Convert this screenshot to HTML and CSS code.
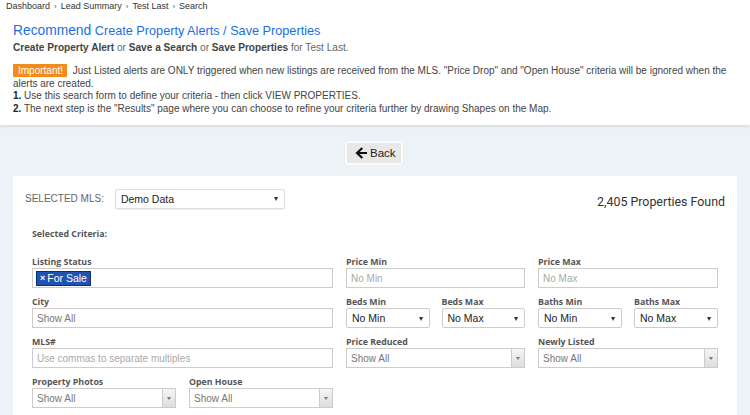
FILE: index.html
```html
<!DOCTYPE html>
<html>
<head>
<meta charset="utf-8">
<link rel="stylesheet" href="styles.css">
</head>
<body>
<header class="top">
  <nav class="crumbs">
    <span>Dashboard</span><span class="sep">›</span><span>Lead Summary</span><span class="sep">›</span><span>Test Last</span><span class="sep">›</span><span>Search</span>
  </nav>
  <h1 class="title"><span class="big">Recommend</span> Create Property Alerts / Save Properties</h1>
  <p class="sub"><b>Create Property Alert</b> or <b>Save a Search</b> or <b>Save Properties</b> for Test Last.</p>
  <div class="notes">
    <p><span class="badge">Important!</span> Just Listed alerts are ONLY triggered when new listings are received from the MLS. "Price Drop" and "Open House" criteria will be ignored when the alerts are created.</p>
    <p><b>1.</b> Use this search form to define your criteria - then click VIEW PROPERTIES.</p>
    <p><b>2.</b> The next step is the "Results" page where you can choose to refine your criteria further by drawing Shapes on the Map.</p>
  </div>
</header>
<main class="main">
  <div class="backrow">
    <button class="back"><svg class="arrow" viewBox="0 0 12 12" width="12" height="12"><path d="M11 6H2.5M6.5 1.8L2 6l4.5 4.2" fill="none" stroke="#111" stroke-width="2.2" stroke-linecap="square"/></svg>Back</button>
  </div>
  <section class="panel">
    <div class="mlsrow">
      <div class="mls-left">
        <span class="mls-label">SELECTED MLS:</span>
        <div class="sel sel-mls"><span>Demo Data</span><span class="caret">▾</span></div>
      </div>
      <div class="found">2,405 Properties Found</div>
    </div>
    <div class="criteria">
      <div class="crit-title">Selected Criteria:</div>
      <div class="grid">
        <div class="field">
          <label>Listing Status</label>
          <div class="input tags"><span class="tag"><span class="x">×</span> For Sale</span></div>
        </div>
        <div class="field">
          <label>Price Min</label>
          <div class="input ph-light">No Min</div>
        </div>
        <div class="field">
          <label>Price Max</label>
          <div class="input ph-light">No Max</div>
        </div>

        <div class="field">
          <label>City</label>
          <div class="input ph">Show All</div>
        </div>
        <div class="pair">
          <div class="field">
            <label>Beds Min</label>
            <div class="sel"><span>No Min</span><span class="caret">▾</span></div>
          </div>
          <div class="field">
            <label>Beds Max</label>
            <div class="sel"><span>No Max</span><span class="caret">▾</span></div>
          </div>
        </div>
        <div class="pair">
          <div class="field">
            <label>Baths Min</label>
            <div class="sel"><span>No Min</span><span class="caret">▾</span></div>
          </div>
          <div class="field">
            <label>Baths Max</label>
            <div class="sel"><span>No Max</span><span class="caret">▾</span></div>
          </div>
        </div>

        <div class="field">
          <label>MLS#</label>
          <div class="input ph-light">Use commas to separate multiples</div>
        </div>
        <div class="field">
          <label>Price Reduced</label>
          <div class="combo"><span>Show All</span><span class="btn"><i></i></span></div>
        </div>
        <div class="field">
          <label>Newly Listed</label>
          <div class="combo"><span>Show All</span><span class="btn"><i></i></span></div>
        </div>

        <div class="pair pair-wide">
          <div class="field">
            <label>Property Photos</label>
            <div class="combo"><span>Show All</span><span class="btn"><i></i></span></div>
          </div>
          <div class="field">
            <label>Open House</label>
            <div class="combo"><span>Show All</span><span class="btn"><i></i></span></div>
          </div>
        </div>
      </div>
    </div>
  </section>
</main>
</body>
</html>
```

FILE: styles.css
```css
* { box-sizing: border-box; }
html, body { margin: 0; padding: 0; }
body {
  font-family: "Liberation Sans", Arial, sans-serif;
  color: #333;
  background: #ecf3f6;
  width: 750px;
  height: 415px;
  overflow: hidden;
}
.top {
  background: #fff;
  padding: 0 13px;
  height: 125px;
  box-shadow: 0 1px 3px rgba(0,0,0,0.12);
  position: relative;
}
.crumbs {
  font-size: 9px;
  line-height: 13px;
  margin-left: -7px;
  color: #333;
  display: flex;
  gap: 4px;
}
.crumbs .sep { font-size: 8px; color: #555; }
.title {
  margin: 9px 0 0 0;
  font-weight: normal;
  font-size: 12.7px;
  line-height: 18px;
  color: #1a6fe6;
}
.title .big { font-size: 13.8px; }
.sub {
  margin: 1px 0 0 0;
  font-size: 10.1px;
  line-height: 13px;
  color: #666;
}
.sub b { color: #444; }
.notes {
  margin-top: 11px;
  font-size: 10px;
  line-height: 12.6px;
  color: #444;
}
.notes p { margin: 0; }
.notes b { color: #222; }
.badge {
  background: #f28a1c;
  color: #fff;
  padding: 1px 4px 1px 5px;
  margin-right: 3px;
}
.main { padding: 16px 13px 0 13px; }
.backrow { display: flex; justify-content: center; margin-left: -2px; }
.back {
  display: flex;
  align-items: center;
  gap: 3px;
  height: 24px;
  width: 58px;
  padding: 0 0 0 8px;
  font-family: "Liberation Sans", Arial, sans-serif;
  font-size: 11.5px;
  color: #222;
  background: #e8e8e8;
  border: 2px solid #fbfbfb;
  border-radius: 2px;
  box-shadow: 0 0 1px rgba(0,0,0,0.15);
}
.arrow { display: block; }
.panel {
  margin-top: 11px;
  background: #fff;
  height: 239px;
  padding: 12px 12px 0 12px;
}
.mlsrow {
  display: flex;
  justify-content: space-between;
  align-items: center;
}
.mls-left { display: flex; align-items: center; gap: 11px; }
.mls-label { font-size: 10px; color: #666; }
.found {
  font-family: Roboto, "Liberation Sans", sans-serif;
  font-size: 12.4px;
  color: #333;
  padding-top: 6px;
}
.sel {
  height: 20px;
  border: 1px solid #ccc;
  border-radius: 2px;
  display: flex;
  align-items: center;
  justify-content: space-between;
  padding: 0 6px 0 5px;
  font-size: 10.5px;
  color: #222;
  background: #fff;
}
.sel-mls { width: 170px; border-color: #ddd; box-shadow: 0 1px 1px rgba(0,0,0,0.06); }
.caret { font-size: 8px; color: #333; }
.criteria { padding: 19px 0 0 7px; width: 693px; }
.crit-title {
  font-family: "Open Sans", sans-serif;
  font-weight: 700;
  font-size: 8.8px;
  line-height: 12px;
  color: #555;
}
.grid {
  margin-top: 16px;
  display: grid;
  grid-template-columns: 301px 179px 180px;
  column-gap: 13px;
  row-gap: 8px;
}
.pair { display: grid; grid-template-columns: 1fr 1fr; column-gap: 12px; }
.pair-wide { column-gap: 13px; }
.field { display: flex; flex-direction: column; min-width: 0; }
.field label {
  font-family: "Open Sans", sans-serif;
  font-weight: 700;
  font-size: 8.8px;
  line-height: 12px;
  color: #555;
}
.input {
  height: 20px;
  border: 1px solid #ccc;
  display: flex;
  align-items: center;
  padding: 0 4px;
  font-size: 10px;
  white-space: nowrap;
  overflow: hidden;
}
.ph { color: #777; }
.ph-light { color: #aaa; }
.tags { padding: 0 3px; }
.tag {
  background: #2052b2;
  color: #fff;
  border: 1px solid #0d2f70;
  font-size: 10.5px;
  line-height: 13px;
  padding: 0 3px;
  height: 15px;
  display: inline-flex;
  align-items: center;
  gap: 2px;
}
.tag .x { font-size: 9px; font-weight: bold; }
.combo {
  height: 20px;
  border: 1px solid #ccc;
  display: flex;
  align-items: center;
  justify-content: space-between;
  padding-left: 4px;
  font-size: 10px;
  color: #777;
  background: #fff;
}
.combo .btn {
  width: 13px;
  height: 100%;
  border-left: 1px solid #ccc;
  background: linear-gradient(#f6f6f6, #ddd);
  display: flex;
  align-items: center;
  justify-content: center;
}
.combo .btn i {
  width: 0; height: 0;
  border-left: 2px solid transparent;
  border-right: 2px solid transparent;
  border-top: 3px solid #777;
}
```
